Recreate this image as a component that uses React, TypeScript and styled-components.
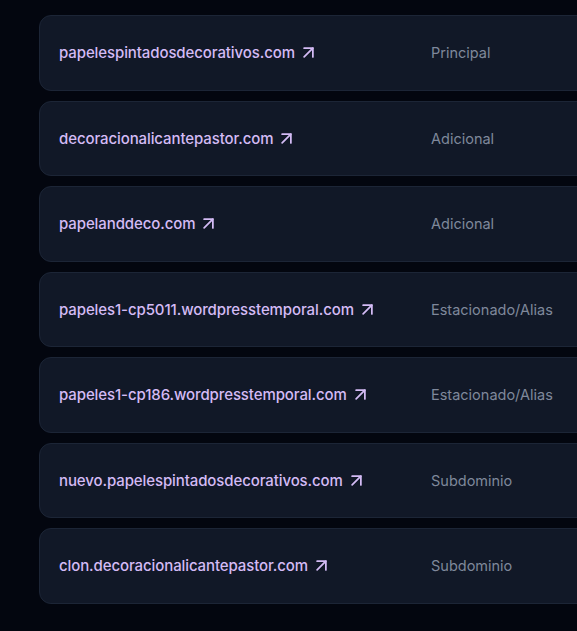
import React from "react";
import styled, { createGlobalStyle } from "styled-components";
import { ArrowUpRight } from "lucide-react";

const GlobalStyle = createGlobalStyle`
  html, body { margin: 0; padding: 0; background: #03060f; overflow: hidden; }
  body { font-family: Inter, "Noto Sans", sans-serif; }
`;

const Page = styled.div`
  padding: 15px 0 0 39px;
  width: 760px;
`;

const List = styled.div`
  display: flex;
  flex-direction: column;
  gap: 10px;
`;

const Card = styled.div`
  box-sizing: border-box;
  display: grid;
  grid-template-columns: 372px 1fr;
  align-items: center;
  height: 75.5px;
  padding: 0 19px;
  background: #111827;
  border: 1px solid #1c2536;
  border-radius: 12px;
`;

const DomainLink = styled.a`
  display: inline-flex;
  align-items: center;
  gap: 3px;
  color: #d4bbf5;
  font-size: 15px;
  font-weight: 500;
  text-decoration: none;
  letter-spacing: -0.1px;
`;

const TypeLabel = styled.span`
  color: #7f889b;
  font-size: 14.5px;
  font-weight: 400;
`;

const rows = [
  { domain: "papelespintadosdecorativos.com", type: "Principal" },
  { domain: "decoracionalicantepastor.com", type: "Adicional" },
  { domain: "papelanddeco.com", type: "Adicional" },
  { domain: "papeles1-cp5011.wordpresstemporal.com", type: "Estacionado/Alias" },
  { domain: "papeles1-cp186.wordpresstemporal.com", type: "Estacionado/Alias" },
  { domain: "nuevo.papelespintadosdecorativos.com", type: "Subdominio" },
  { domain: "clon.decoracionalicantepastor.com", type: "Subdominio" },
];

export default function App() {
  return (
    <>
      <GlobalStyle />
      <Page>
        <List>
          {rows.map((r) => (
            <Card key={r.domain}>
              <div>
                <DomainLink href="#">
                  {r.domain}
                  <ArrowUpRight size={21} strokeWidth={2} />
                </DomainLink>
              </div>
              <TypeLabel>{r.type}</TypeLabel>
            </Card>
          ))}
        </List>
      </Page>
    </>
  );
}
